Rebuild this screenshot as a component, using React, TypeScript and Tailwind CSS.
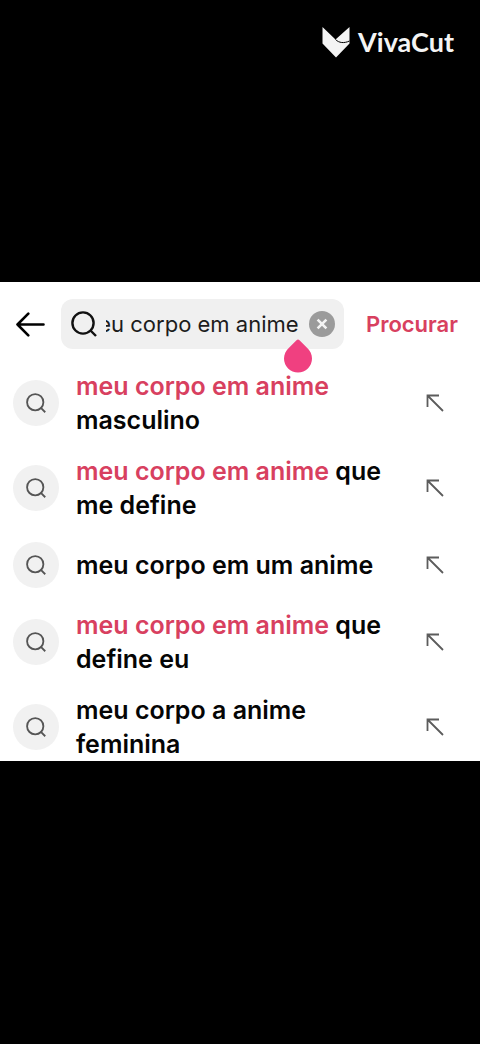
import { useEffect, useRef, useState } from "react";

type Suggestion = {
  match?: string;
  rest: string;
};

const suggestions: Suggestion[] = [
  { match: "meu corpo em anime", rest: " masculino" },
  { match: "meu corpo em anime", rest: " que me define" },
  { rest: "meu corpo em um anime" },
  { match: "meu corpo em anime", rest: " que define eu" },
  { rest: "meu corpo a anime feminina" },
];

function SearchIcon({ className, strokeWidth }: { className: string; strokeWidth: number }) {
  return (
    <svg
      viewBox="0 0 26 26"
      className={className}
      fill="none"
      stroke="currentColor"
      strokeWidth={strokeWidth}
      aria-hidden="true"
    >
      <circle cx="12" cy="12" r="10.6" />
      <path d="M19 19 25 25" />
    </svg>
  );
}

function Watermark() {
  return (
    <div className="flex items-center gap-2 text-[#f4f4f4]">
      <svg viewBox="0 0 28 32" className="h-8 w-7" aria-hidden="true">
        <path
          d="M0.5 1 13.5 13.5 27.5 1V17.5L14 31.5 0.5 17.5Z"
          fill="currentColor"
        />
        <path
          d="M13.5 13.5C17 17 22 17.5 27.5 15"
          fill="none"
          stroke="#000"
          strokeWidth="1"
        />
      </svg>
      <span className="pt-px font-[Lato,sans-serif] text-[27px] leading-8 font-bold">
        VivaCut
      </span>
    </div>
  );
}

function SearchBar() {
  const [query, setQuery] = useState("meu corpo em anime");
  const inputRef = useRef<HTMLInputElement>(null);

  // keep the end of the query in view
  useEffect(() => {
    if (inputRef.current) {
      inputRef.current.scrollLeft = inputRef.current.scrollWidth;
    }
  }, [query]);

  return (
    <form
      className="flex items-center px-4 pt-[17px] pb-5"
      onSubmit={(e) => e.preventDefault()}
    >
      <button type="button" aria-label="Voltar" className="mr-4 shrink-0">
        <svg
          viewBox="0 0 29 25"
          className="h-[25px] w-[29px]"
          fill="none"
          stroke="#000"
          strokeWidth="2.6"
          strokeLinecap="round"
          strokeLinejoin="round"
        >
          <path d="M12.3 1.7 1.5 12.5 12.3 23.3M1.5 12.5H27.5" />
        </svg>
      </button>
      <div className="relative flex h-[50px] min-w-0 flex-1 items-center rounded-xl bg-[#f0f0f0] pr-[9px] pl-[10px]">
        <SearchIcon className="h-[26px] w-[26px] shrink-0 text-[#111]" strokeWidth={2.4} />
        <input
          ref={inputRef}
          type="text"
          aria-label="Pesquisar"
          value={query}
          onChange={(e) => setQuery(e.target.value)}
          className="ml-[9px] min-w-0 flex-1 bg-transparent text-[22px] leading-8 text-[#1c1c1c] outline-none"
        />
        <button
          type="button"
          aria-label="Limpar"
          onClick={() => setQuery("")}
          className="ml-[10px] shrink-0"
        >
          <svg viewBox="0 0 26 26" className="h-[26px] w-[26px]">
            <circle cx="13" cy="13" r="13" fill="#9b9b9b" />
            <path
              d="M8.6 8.6 17.4 17.4M17.4 8.6 8.6 17.4"
              stroke="#f4f4f4"
              strokeWidth="2.6"
            />
          </svg>
        </button>
        {/* text cursor handle */}
        <svg
          viewBox="0 0 28 34"
          className="absolute top-10 right-8 h-[34px] w-7"
          aria-hidden="true"
        >
          <path
            d="M14 0.5C15 0.5 16 1.8 17 2.8L23 8.8C26 11.5 28 15.5 28 19.5A14 14 0 0 1 0 19.5C0 15.5 2 11.5 5 8.8L11 2.8C12 1.8 13 0.5 14 0.5Z"
            fill="#f04080"
          />
        </svg>
      </div>
      <button
        type="submit"
        className="mr-[6px] ml-[22px] shrink-0 text-[22px] leading-8 font-semibold text-[#d8405f]"
      >
        Procurar
      </button>
    </form>
  );
}

function SuggestionRow({ match, rest }: Suggestion) {
  return (
    <li className="flex min-h-[52px] items-center pr-9 pl-[13px]">
      <span className="flex h-[46px] w-[46px] shrink-0 items-center justify-center rounded-full bg-[#f1f1f1]">
        <SearchIcon className="h-5 w-5 text-[#555]" strokeWidth={2.4} />
      </span>
      <a
        href="#"
        className="mr-11 ml-[17px] min-w-0 flex-1 text-[25px] leading-[34px] font-semibold text-[#050505]"
      >
        {match && <span className="text-[#d8405f]">{match}</span>}
        {rest}
      </a>
      <button type="button" aria-label="Usar sugestão" className="shrink-0">
        <svg
          viewBox="0 0 18 18"
          className="h-[18px] w-[18px]"
          fill="none"
          stroke="#5c5c5c"
          strokeWidth="1.8"
        >
          <path d="M13 1.5H1.5V13M1.5 1.5 17 17" />
        </svg>
      </button>
    </li>
  );
}

export default function App() {
  return (
    <div className="flex min-h-screen flex-col bg-black font-[Inter,sans-serif]">
      <header className="flex h-[282px] items-start justify-end pt-[25px] pr-[26px]">
        <Watermark />
      </header>
      <main className="bg-white">
        <SearchBar />
        <ul className="flex flex-col gap-[17px]">
          {suggestions.map((s, i) => (
            <SuggestionRow key={i} match={s.match} rest={s.rest} />
          ))}
        </ul>
      </main>
    </div>
  );
}
